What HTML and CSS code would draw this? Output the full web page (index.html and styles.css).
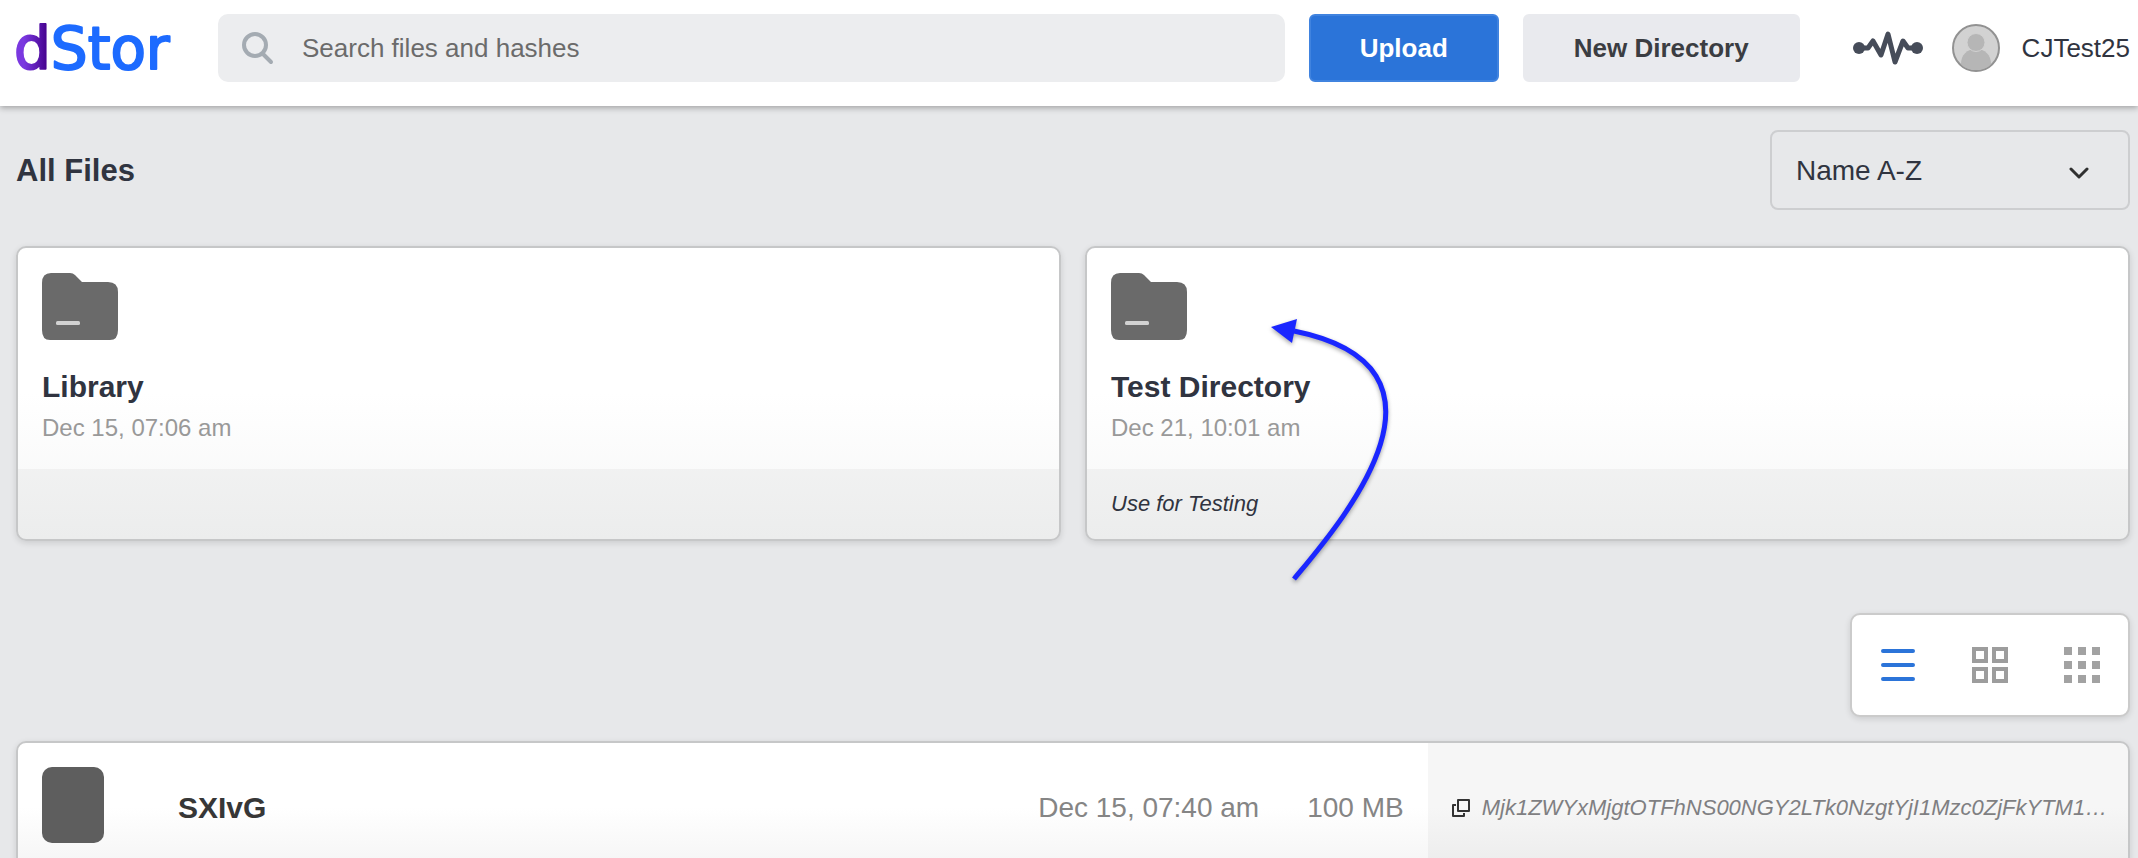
FILE: index.html
```html
<!DOCTYPE html>
<html lang="en">
<head>
<meta charset="utf-8">
<title>dStor – All Files</title>
<meta name="viewport" content="width=device-width, initial-scale=1">
<link rel="stylesheet" href="styles.css">
</head>
<body>
<header class="topbar">
  <a class="logo" href="#" aria-label="dStor">
    <svg viewBox="0 0 178 68">
      <defs>
        <linearGradient id="logo-purple" gradientUnits="userSpaceOnUse" x1="2" y1="0" x2="32" y2="0">
          <stop offset="0.2" stop-color="#7a38e0"/>
          <stop offset="1" stop-color="#43008a"/>
        </linearGradient>
      </defs>
      <text class="logo-text" x="-2" y="55"><tspan class="logo-d">d</tspan>Stor</text>
    </svg>
  </a>
  <label class="search">
    <svg class="search-icon" viewBox="0 0 32 34" aria-hidden="true"><circle cx="13" cy="14" r="11"/><path d="M21 23l8 8"/></svg>
    <input class="search-input" type="search" placeholder="Search files and hashes" aria-label="Search files and hashes">
  </label>
  <button class="btn btn-primary" type="button">Upload</button>
  <button class="btn btn-secondary" type="button">New Directory</button>
  <button class="pulse" type="button" aria-label="Activity">
    <svg viewBox="0 0 70 36" aria-hidden="true"><circle cx="6" cy="18" r="6"/><circle cx="64" cy="18" r="6"/><path d="M6 18H15L20 11L28 25L35 4L42 32L50 11L55 18H64"/></svg>
  </button>
  <a class="account" href="#">
    <svg class="avatar" viewBox="0 0 48 48" aria-hidden="true">
      <circle class="avatar-bg" cx="24" cy="24" r="23"/>
      <path class="avatar-body" d="M9 40c0-9 6-15 15-15s15 6 15 15c-3 4-9 6-15 6s-12-2-15-6z"/>
      <circle class="avatar-head" cx="24" cy="18.500" r="9"/>
    </svg>
    <span>CJTest25</span>
  </a>
</header>
<main class="page">
  <div class="heading">
    <h1 class="title">All Files</h1>
    <div class="sort">
      <select class="sort-select" aria-label="Sort files"><option>Name A-Z</option><option>Name Z-A</option></select>
      <svg class="sort-chevron" viewBox="0 0 20 12" aria-hidden="true"><path d="M2 2l8 8l8-8"/></svg>
    </div>
  </div>
  <section class="folders" aria-label="Directories">
    <article class="card">
      <div class="card-body">
        <svg class="folder" viewBox="0 0 76 67" aria-hidden="true"><path d="M9 0H28Q31 0 33 2L40 9H66Q76 9 76 19V57Q76 67 68 67H8Q0 67 0 57V10Q0 0 9 0Z"/><rect x="14" y="48" width="24" height="4" rx="1.500"/></svg>
        <h2 class="card-title">Library</h2>
        <time class="card-date">Dec 15, 07:06 am</time>
      </div>
      <p class="card-note"></p>
    </article>
    <article class="card">
      <div class="card-body">
        <svg class="folder" viewBox="0 0 76 67" aria-hidden="true"><path d="M9 0H28Q31 0 33 2L40 9H66Q76 9 76 19V57Q76 67 68 67H8Q0 67 0 57V10Q0 0 9 0Z"/><rect x="14" y="48" width="24" height="4" rx="1.500"/></svg>
        <h2 class="card-title">Test Directory</h2>
        <time class="card-date">Dec 21, 10:01 am</time>
      </div>
      <p class="card-note">Use for Testing</p>
      <svg class="pointer" viewBox="0 0 130 270" aria-hidden="true"><path class="pointer-line" d="M28 261C71 209 211 50 28 13"/><path class="pointer-head" d="M5 9L31 1L26 25Z"/></svg>
    </article>
  </section>
  <div class="views" role="group" aria-label="View">
    <button class="view view-active" type="button" aria-label="List"><svg viewBox="0 0 36 36" aria-hidden="true"><path d="M3 4H33M3 18H33M3 32H33"/></svg></button>
    <button class="view" type="button" aria-label="Large grid"><svg viewBox="0 0 36 36" aria-hidden="true"><path d="M2 2h12v12H2zM22 2h12v12H22zM2 22h12v12H2zM22 22h12v12H22z"/></svg></button>
    <button class="view view-small" type="button" aria-label="Small grid"><svg viewBox="0 0 36 36" aria-hidden="true"><path d="M0 0h8v8H0zM14 0h8v8H14zM28 0h8v8H28zM0 14h8v8H0zM14 14h8v8H14zM28 14h8v8H28zM0 28h8v8H0zM14 28h8v8H14zM28 28h8v8H28z"/></svg></button>
  </div>
  <article class="file">
    <div class="file-main">
      <span class="file-icon"></span>
      <h2 class="file-name">SXIvG</h2>
      <time class="file-meta">Dec 15, 07:40 am</time>
      <span class="file-meta">100 MB</span>
    </div>
    <div class="file-hash">
      <button class="copy" type="button" aria-label="Copy hash"><svg viewBox="0 0 18 18" aria-hidden="true"><path d="M6 1H17V12H6ZM4 6H1V17H12V14"/></svg></button>
      <span class="hash">Mjk1ZWYxMjgtOTFhNS00NGY2LTk0NzgtYjI1Mzc0ZjFkYTM1…</span>
    </div>
  </article>
</main>
</body>
</html>
```
FILE: styles.css
```css
* { box-sizing: border-box; }
body {
  margin: 0;
  background: #e7e8ea;
  color: #303440;
  font-family: "Liberation Sans", Arial, sans-serif;
  font-size: 26px;
}
h1, h2, p { margin: 0; }
button, input, select { font: inherit; color: inherit; }
button { border: 0; background: none; padding: 0; cursor: pointer; }
svg { display: block; }

.topbar {
  display: flex;
  align-items: center;
  gap: 24px;
  padding: 14px 8px 24px 16px;
  background: #fff;
  box-shadow: 0 2px 6px rgba(0, 0, 0, 0.3);
}
.logo { width: 178px; }
.logo svg { width: 178px; height: 68px; overflow: visible; }
.logo-text {
  fill: #1d6bff;
  stroke: #1d6bff;
  stroke-width: 2;
  stroke-linejoin: round;
  font-family: "DejaVu Sans", sans-serif;
  font-size: 58px;
}
.logo-d { fill: url(#logo-purple); stroke: url(#logo-purple); }
.search {
  display: flex;
  align-items: center;
  flex: 1;
  gap: 28px;
  height: 68px;
  padding: 0 24px;
  border-radius: 10px;
  background: #ecedef;
}
.search-icon {
  width: 32px;
  height: 34px;
  fill: none;
  stroke: #a4abb2;
  stroke-width: 4;
  stroke-linecap: round;
}
.search-input {
  flex: 1;
  min-width: 0;
  padding: 0;
  border: 0;
  outline: 0;
  background: none;
}
.search-input::placeholder { color: #6b6b6b; opacity: 1; }
.btn {
  height: 68px;
  padding: 0 49px;
  border: 2px solid transparent;
  border-radius: 6px;
  font-weight: 700;
}
.btn-primary { border-color: #4083df; background: #2b74d9; color: #fff; }
.btn-secondary { border-color: #e9eaee; background: #e9eaee; color: #3b3d42; }
.pulse { width: 70px; margin: 0 5px 0 29px; }
.pulse svg { width: 70px; height: 36px; fill: #464c59; }
.pulse path {
  fill: none;
  stroke: #464c59;
  stroke-width: 5;
  stroke-linejoin: round;
}
.account {
  display: flex;
  align-items: center;
  gap: 22px;
  color: #303440;
  text-decoration: none;
}
.avatar { width: 48px; height: 48px; }
.avatar-bg { fill: #d2d2d2; stroke: #929292; stroke-width: 2; }
.avatar-body { fill: #b6b6b6; }
.avatar-head { fill: #b6b6b6; stroke: #d2d2d2; stroke-width: 1; }

.page { padding: 24px 8px 24px 16px; }
.heading {
  display: flex;
  align-items: center;
  justify-content: space-between;
  margin-bottom: 36px;
}
.title { padding-top: 2px; font-size: 31px; line-height: 36px; }
.sort { position: relative; width: 360px; }
.sort-select {
  width: 100%;
  height: 80px;
  padding: 0 24px;
  border: 2px solid #cdced0;
  border-radius: 8px;
  background: transparent;
  font-size: 28px;
  appearance: none;
}
.sort-chevron {
  position: absolute;
  top: 37px;
  right: 41px;
  width: 20px;
  height: 12px;
  fill: none;
  stroke: #303030;
  stroke-width: 3;
  stroke-linecap: round;
  stroke-linejoin: round;
  pointer-events: none;
}

.folders {
  display: grid;
  grid-template-columns: 1fr 1fr;
  gap: 24px;
  margin-bottom: 72px;
}
.card {
  position: relative;
  border: 2px solid #c6c7c8;
  border-radius: 10px;
  background: linear-gradient(#fff 50%, #f5f6f6);
  box-shadow: 0 2px 6px rgba(0, 0, 0, 0.12);
}
.card-body { padding: 25px 24px 27px; }
.folder { width: 76px; height: 67px; margin-bottom: 29px; fill: #6a6a6a; }
.folder rect { fill: #d2d2d2; }
.card-title { margin-bottom: 9px; font-size: 30px; line-height: 36px; }
.card-date {
  display: block;
  color: #999;
  font-size: 24px;
  line-height: 28px;
}
.card-note {
  min-height: 70px;
  padding: 0 24px;
  border-radius: 0 0 8px 8px;
  background: rgba(0, 0, 0, 0.035);
  font-size: 22px;
  font-style: italic;
  line-height: 70px;
}
.pointer {
  position: absolute;
  top: 70px;
  left: 179px;
  width: 130px;
  height: 270px;
  overflow: visible;
  filter: drop-shadow(0 2px 2px rgba(0, 0, 0, 0.35));
  pointer-events: none;
}
.pointer-line { fill: none; stroke: #1a26ff; stroke-width: 5; }
.pointer-head { fill: #1a26ff; }

.views {
  display: flex;
  align-items: center;
  justify-content: space-between;
  width: 280px;
  height: 104px;
  margin: 0 0 24px auto;
  padding: 0 28px;
  border: 2px solid #cbcbcb;
  border-radius: 10px;
  background: #fff;
  box-shadow: 0 2px 6px rgba(0, 0, 0, 0.12);
}
.view svg {
  width: 36px;
  height: 36px;
  fill: none;
  stroke: #9d9d9d;
  stroke-width: 4;
}
.view-active svg { stroke: #2b74d9; stroke-linecap: round; }
.view-small svg { fill: #a2a2a2; stroke: none; }

.file {
  display: flex;
  border: 2px solid #c6c7c8;
  border-radius: 10px;
  background: linear-gradient(#fff 50%, #f4f4f4);
  box-shadow: 0 2px 6px rgba(0, 0, 0, 0.12);
}
.file-main {
  display: flex;
  align-items: center;
  flex: 1;
  gap: 48px;
  min-height: 129px;
  padding: 24px;
}
.file-icon {
  align-self: flex-start;
  width: 62px;
  height: 76px;
  margin-right: 26px;
  border-radius: 10px;
  background: #5e5e5e;
}
.file-name { flex: 1; color: #373737; font-size: 30px; }
.file-meta { color: #858585; font-size: 28px; }
.file-hash {
  display: flex;
  align-items: center;
  gap: 12px;
  width: calc(33% + 4px);
  padding: 0 12px 0 24px;
  border-radius: 0 8px 8px 0;
  background: rgba(0, 0, 0, 0.035);
}
.copy svg {
  width: 18px;
  height: 18px;
  fill: none;
  stroke: #333;
  stroke-width: 2;
  stroke-linejoin: round;
}
.hash {
  min-width: 0;
  overflow: hidden;
  color: #7f7f82;
  font-size: 22px;
  font-style: italic;
  text-overflow: ellipsis;
  white-space: nowrap;
}
```
